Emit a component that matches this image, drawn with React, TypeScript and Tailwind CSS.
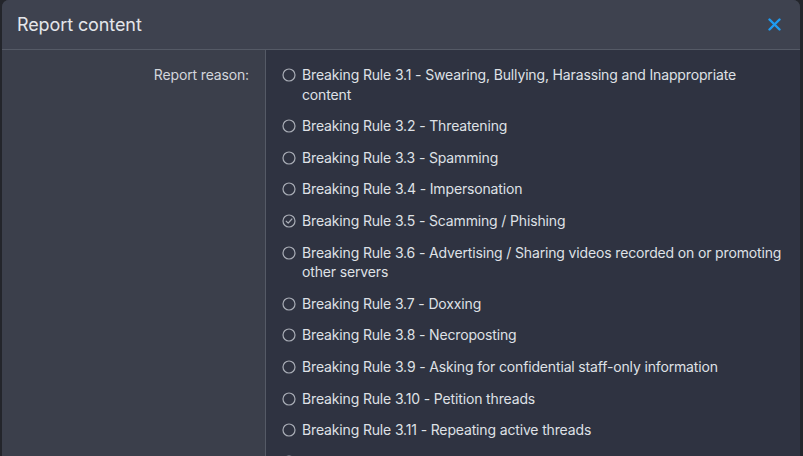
import { useState } from "react";

const reasons = [
  "Breaking Rule 3.1 - Swearing, Bullying, Harassing and Inappropriate content",
  "Breaking Rule 3.2 - Threatening",
  "Breaking Rule 3.3 - Spamming",
  "Breaking Rule 3.4 - Impersonation",
  "Breaking Rule 3.5 - Scamming / Phishing",
  "Breaking Rule 3.6 - Advertising / Sharing videos recorded on or promoting other servers",
  "Breaking Rule 3.7 - Doxxing",
  "Breaking Rule 3.8 - Necroposting",
  "Breaking Rule 3.9 - Asking for confidential staff-only information",
  "Breaking Rule 3.10 - Petition threads",
  "Breaking Rule 3.11 - Repeating active threads",
  "Breaking Rule 3.12 - Other",
];

function Radio({ checked }: { checked: boolean }) {
  return (
    <svg width="14" height="14" viewBox="0 0 14 14" className="mt-[3px] shrink-0">
      <circle cx="7" cy="7" r="6" fill="none" stroke="#a9adb6" strokeWidth="1.2" />
      {checked && (
        <path
          d="M4.2 7.2 L6.2 9.1 L9.9 5"
          fill="none"
          stroke="#a9adb6"
          strokeWidth="1.2"
          strokeLinecap="round"
          strokeLinejoin="round"
        />
      )}
    </svg>
  );
}

export default function App() {
  const [selected, setSelected] = useState(4);

  return (
    <div
      className="h-[456px] w-[803px] overflow-hidden bg-[#23252b] pl-[2px] pr-[3px]"
      style={{ fontFamily: "Inter, 'Noto Sans', sans-serif" }}
    >
      <div className="flex h-full flex-col overflow-hidden rounded-t-[7px] bg-[#3b3f4b]">
        {/* Header */}
        <div className="flex h-[50px] shrink-0 items-center justify-between border-b border-[#555a66] bg-[#3e424f] pl-[15px] pr-[19px]">
          <h1 className="text-[18px] tracking-[-0.1px] text-[#e4e6ea]">Report content</h1>
          <svg width="13" height="13" viewBox="0 0 13 13">
            <path
              d="M1.5 1.5 L11.5 11.5 M11.5 1.5 L1.5 11.5"
              stroke="#1e9bf0"
              strokeWidth="2.4"
              strokeLinecap="round"
            />
          </svg>
        </div>

        {/* Body */}
        <div className="flex flex-1 text-[14px] leading-[1.4] tracking-[-0.15px]">
          <div className="w-[263px] shrink-0 pr-4 pt-[15px] text-right text-[#d3d6dc]">
            Report reason:
          </div>
          <div className="flex flex-1 flex-col gap-3 border-l border-[#555a66] bg-[#2f3341] pl-4 pr-4 pt-[15px]">
            {reasons.map((r, i) => (
              <label
                key={r}
                className="flex cursor-pointer gap-[6px] text-[#dfe1e6]"
                onClick={() => setSelected(i)}
              >
                <Radio checked={selected === i} />
                <span>{r}</span>
              </label>
            ))}
          </div>
        </div>
      </div>
    </div>
  );
}
